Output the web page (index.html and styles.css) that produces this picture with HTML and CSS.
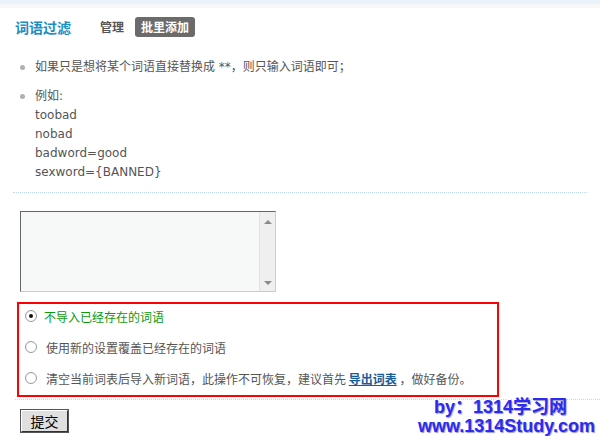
FILE: index.html
```html
<!DOCTYPE html>
<html lang="zh-CN">
<head>
    <meta charset="utf-8">
    <title>词语过滤 - 批里添加</title>
    <link rel="stylesheet" href="styles.css">
</head>
<body>
    <div class="topbar"></div>
    <div class="nav">
        <h3>词语过滤</h3>
        <a href="#" class="tab">管理</a>
        <a href="#" class="tab current">批里添加</a>
    </div>
    <ul class="tips">
        <li>如果只是想将某个词语直接替换成 **，则只输入词语即可；</li>
        <li>例如:<br>toobad<br>nobad<br>badword=good<br>sexword={BANNED}</li>
    </ul>
    <form class="import">
        <div class="field">
            <textarea name="badwords"></textarea>
            <div class="scroll">
                <span class="arr up"></span>
                <span class="arr down"></span>
            </div>
        </div>
        <div class="options">
            <label class="row"><input type="radio" name="type" checked><span class="green">不导入已经存在的词语</span></label>
            <label class="row"><input type="radio" name="type"><span class="txt">使用新的设置覆盖已经存在的词语</span></label>
            <label class="row"><input type="radio" name="type"><span class="txt">清空当前词表后导入新词语，此操作不可恢复，建议首先 <a href="#" class="export">导出词表</a> ，做好备份。</span></label>
        </div>
        <div class="submit">
            <button type="button" class="btn">提交</button>
        </div>
    </form>
    <div class="watermark">
        <div>by：1314学习网</div>
        <div>www.1314Study.com</div>
    </div>
</body>
</html>
```

FILE: styles.css
```css
body {
    margin: 0;
    font: 12px/19px "DejaVu Sans", "Noto Sans CJK SC", sans-serif;
    color: #555;
    background: #fff;
}

.topbar {
    height: 4px;
    background: #eaf3fb;
    border-bottom: 4px solid #f7f7f7;
}

.nav {
    display: flex;
    align-items: center;
    height: 22px;
    padding: 8px 15px 0;
}
.nav h3 {
    margin: 0 29px 0 0;
    font: bold 14px/20px "Noto Sans CJK SC", sans-serif;
    color: #1b8ec4;
}
.tab {
    font: bold 12px/20px "Noto Sans CJK SC", sans-serif;
    color: #555;
    text-decoration: none;
    margin-right: 11px;
}
.tab.current {
    background: #6b6b6b;
    color: #fff;
    padding: 0 6px;
    border-radius: 3px;
}

.tips {
    list-style: none;
    margin: 20px 13px 0;
    padding: 0 0 10px 22px;
    border-bottom: 1px dotted #bcdcf0;
}
.tips li {
    position: relative;
    margin-bottom: 10px;
}
.tips li:last-child {
    margin-bottom: 0;
}
.tips li::before {
    content: "";
    position: absolute;
    left: -15px;
    top: 7px;
    width: 5px;
    height: 5px;
    border-radius: 50%;
    background: #b0b0b0;
}

.import {
    margin: 18px 0 0 15px;
}
.field {
    display: flex;
    width: 254px;
    height: 79px;
    margin-left: 5px;
    border: 1px solid #ccc;
    border-top-color: #666;
    border-left-color: #666;
    background: #f7f8f8;
}
.field textarea {
    flex: 1;
    border: none;
    background: transparent;
    resize: none;
    outline: none;
    padding: 2px;
}
.scroll {
    width: 15px;
    background: #efefef;
    border-left: 1px solid #e0e4e8;
    display: flex;
    flex-direction: column;
    justify-content: space-between;
    align-items: center;
    padding: 8px 0 6px;
}
.arr {
    width: 0;
    height: 0;
    border-left: 4px solid transparent;
    border-right: 4px solid transparent;
}
.arr.up {
    border-bottom: 4px solid #8a8a8a;
}
.arr.down {
    border-top: 4px solid #8a8a8a;
}

.options {
    width: 482px;
    margin: 10px 0 0 2px;
    padding: 0 0 5px 6px;
    border: 2px solid #ff0000;
    box-sizing: border-box;
    height: 95px;
    display: flex;
    flex-direction: column;
    gap: 7px;
}
.row {
    display: flex;
    align-items: center;
    height: 24px;
    gap: 7px;
}
.row input {
    appearance: none;
    margin: 0;
    width: 12px;
    height: 12px;
    border-radius: 50%;
    border: 1px solid #9a9a9a;
    background: radial-gradient(circle at 60% 60%, #fff 55%, #e4e4e4 100%);
    box-sizing: border-box;
    position: relative;
}
.row input:checked::after {
    content: "";
    position: absolute;
    left: 3px;
    top: 3px;
    width: 4px;
    height: 4px;
    border-radius: 50%;
    background: #111;
}
.green {
    color: #0a9a0a;
    font-family: "Noto Sans CJK SC", sans-serif;
}
.txt {
    margin-left: 2px;
    font-family: "Noto Sans CJK SC", sans-serif;
}
.export {
    color: #1a5c98;
    font-weight: bold;
}

.submit {
    margin-top: 2px;
    padding-top: 9px;
    border-top: 1px dotted #bcdcf0;
}
.btn {
    margin-left: 5px;
    width: 49px;
    height: 24px;
    padding: 0;
    font: 14px/18px "Noto Sans CJK SC", sans-serif;
    color: #000;
    background: #e0e0e0;
    border: 2px solid;
    border-color: #fff #333 #333 #fff;
    outline: 1px solid #555;
    outline-offset: -1px;
}

.watermark {
    position: absolute;
    right: 5px;
    bottom: 0;
    text-align: right;
    font: bold 18px/19px "Liberation Sans", "Noto Sans CJK SC", sans-serif;
    color: #2b2bf2;
    text-shadow: 1px 1px 1px #9a9ac0, -1px -1px 0 #fff;
}
.watermark div:first-child {
    margin-right: 28px;
}
```
